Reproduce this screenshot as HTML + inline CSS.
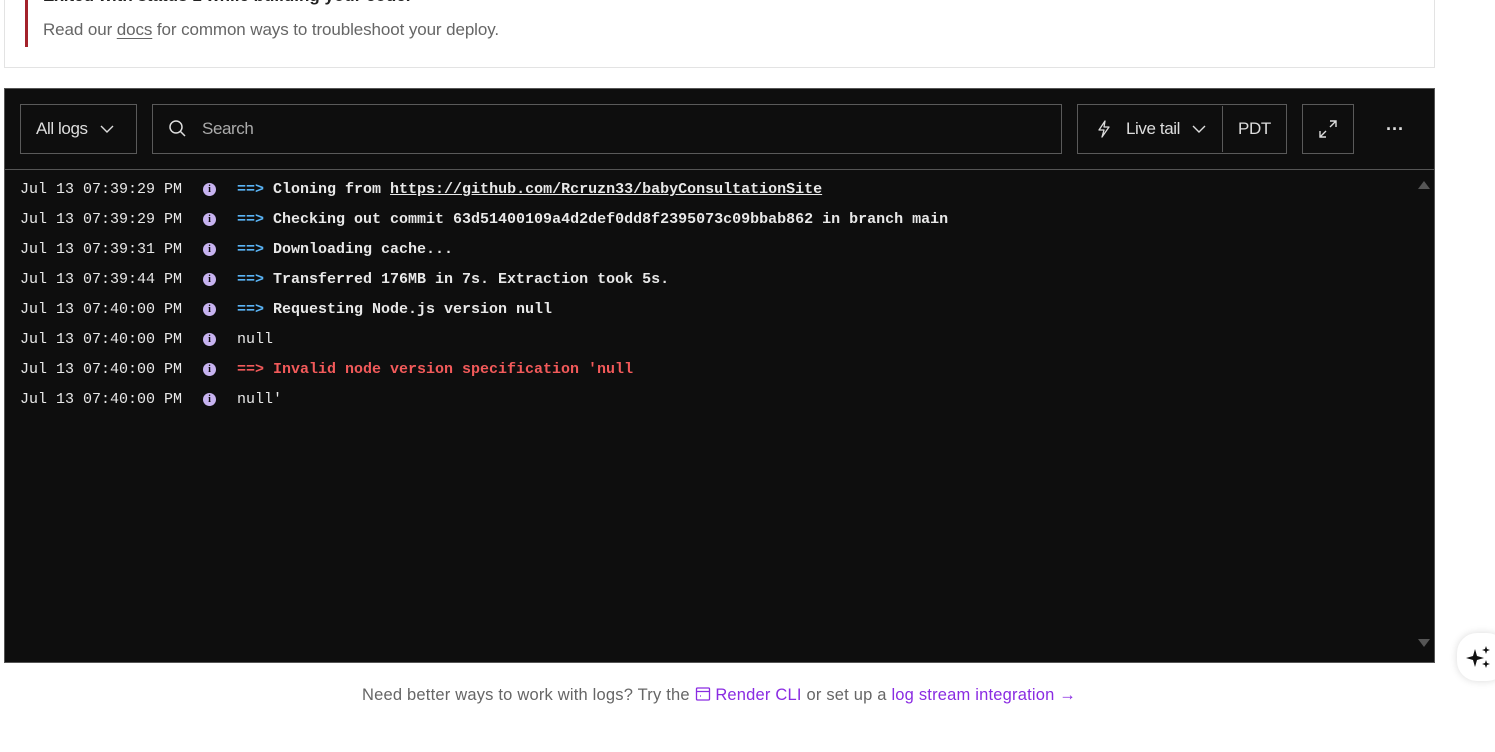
<!DOCTYPE html>
<html><head><style>
*{box-sizing:border-box;margin:0;padding:0}
body{width:1495px;height:752px;background:#fff;font-family:"Liberation Sans",sans-serif;position:relative;overflow:hidden}
.card{position:absolute;left:4px;top:-10px;width:1431px;height:78px;border:1px solid #e3e3e3;border-top:none;background:#fff}
.bar{position:absolute;left:20px;top:0;width:3px;height:57px;background:#a3222b}
.h{position:absolute;left:38px;font-size:17px;font-weight:bold;color:#222;line-height:20px}
.p{position:absolute;left:38px;top:30px;font-size:17px;color:#666;letter-spacing:-0.1px}
.p u{text-decoration:underline;text-underline-offset:3px}
.term{position:absolute;left:4px;top:88px;width:1431px;height:575px;background:#0e0e0e;border:1px solid #555}
.btn{position:absolute;top:15px;height:50px;border:1px solid #5a5a5a;color:#ddd;font-size:17px;display:flex;align-items:center;letter-spacing:-0.4px}
.sep{position:absolute;left:0;top:80px;width:1429px;height:1px;background:#555}
.log{position:absolute;left:15px;font-family:"Liberation Mono",monospace;font-size:15px;color:#e8e8e8;white-space:pre;height:20px;line-height:20px}
.log .m{position:absolute;left:217px;font-weight:bold}
.log .i{position:absolute;left:183px;top:3px;width:13px;height:13px;border-radius:50%;background:#c7b3f0;color:#0e0e0e;font-size:10px;line-height:13px;text-align:center;font-weight:bold;font-family:"Liberation Serif",serif}
.a{color:#5ab4f5}.r{color:#f25a5a}
.foot{position:absolute;left:362px;top:686px;font-size:16.5px;color:#666;letter-spacing:0.2px}
.foot span{color:#8a2be2}
.fab{position:absolute;left:1457px;top:633px;width:50px;height:48px;border-radius:20px;background:#fff;box-shadow:0 0 8px rgba(0,0,0,.15)}
</style></head><body>
<div class="card"><div class="bar"></div><div class="h" style="top:-4px">Exited with status 1 while building your code.</div><div class="p">Read our <u>docs</u> for common ways to troubleshoot your deploy.</div></div>
<div class="term">
<div class="btn" style="left:15px;width:117px;padding-left:15px">All logs<svg style="margin-left:12px" width="14" height="8" viewBox="0 0 14 8"><path d="M1 1l6 6 6-6" stroke="#ddd" fill="none" stroke-width="1.4"/></svg></div>
<div class="btn" style="left:147px;width:910px;padding-left:15px;color:#aaa"><svg width="20" height="20" viewBox="0 0 20 20"><circle cx="8" cy="8" r="6" stroke="#ddd" stroke-width="1.5" fill="none"/><path d="M12.5 12.5L17 17" stroke="#ddd" stroke-width="1.5"/></svg><span style="margin-left:14px">Search</span></div>
<div class="btn" style="left:1072px;width:210px;padding-left:18px"><svg width="16" height="18" viewBox="0 0 16 18"><path d="M9 1L3 10h5l-2 7 7-10H8l1-6z" stroke="#ddd" fill="none" stroke-width="1.3" stroke-linejoin="round"/></svg><span style="margin-left:14px">Live tail</span><svg style="margin-left:12px" width="14" height="8" viewBox="0 0 14 8"><path d="M1 1l6 6 6-6" stroke="#ddd" fill="none" stroke-width="1.4"/></svg><div style="position:absolute;left:144px;top:1px;width:1px;height:46px;background:#5a5a5a"></div><span style="position:absolute;left:160px">PDT</span></div>
<div class="btn" style="left:1297px;width:52px;justify-content:center"><svg width="20" height="20" viewBox="0 0 20 20"><path d="M12 2h6v6M18 2l-6 6M8 18H2v-6M2 18l6-6" stroke="#ddd" fill="none" stroke-width="1.4"/></svg></div>
<div style="position:absolute;left:1381px;top:30px;color:#ddd;font-size:18px;font-weight:bold">···</div>
<div class="sep"></div>
<div style="position:absolute;left:1413px;top:92px;width:0;height:0;border-left:6px solid transparent;border-right:6px solid transparent;border-bottom:8px solid #555"></div>
<div style="position:absolute;left:1413px;top:550px;width:0;height:0;border-left:6px solid transparent;border-right:6px solid transparent;border-top:8px solid #555"></div>
<div class="log" style="top:91px">Jul 13 07:39:29 PM<span class="i">i</span><span class="m"><span class="a">==&gt;</span> Cloning from <u>https://github.com/Rcruzn33/babyConsultationSite</u></span></div>
<div class="log" style="top:121px">Jul 13 07:39:29 PM<span class="i">i</span><span class="m"><span class="a">==&gt;</span> Checking out commit 63d51400109a4d2def0dd8f2395073c09bbab862 in branch main</span></div>
<div class="log" style="top:151px">Jul 13 07:39:31 PM<span class="i">i</span><span class="m"><span class="a">==&gt;</span> Downloading cache...</span></div>
<div class="log" style="top:181px">Jul 13 07:39:44 PM<span class="i">i</span><span class="m"><span class="a">==&gt;</span> Transferred 176MB in 7s. Extraction took 5s.</span></div>
<div class="log" style="top:211px">Jul 13 07:40:00 PM<span class="i">i</span><span class="m"><span class="a">==&gt;</span> Requesting Node.js version null</span></div>
<div class="log" style="top:241px">Jul 13 07:40:00 PM<span class="i">i</span><span class="m" style="font-weight:normal">null</span></div>
<div class="log" style="top:271px">Jul 13 07:40:00 PM<span class="i">i</span><span class="m r">==&gt; Invalid node version specification 'null</span></div>
<div class="log" style="top:301px">Jul 13 07:40:00 PM<span class="i">i</span><span class="m" style="font-weight:normal">null'</span></div>
</div>
<div class="foot">Need better ways to work with logs? Try the <span><svg width="16" height="16" viewBox="0 0 16 16" style="vertical-align:-2px"><rect x="1.5" y="2" width="13" height="12" rx="1" stroke="#8a2be2" fill="none" stroke-width="1.3"/><path d="M1.5 5.5h13M5 10h1" stroke="#8a2be2" stroke-width="1.3"/></svg> Render CLI</span> or set up a <span>log stream integration →</span></div>
<div class="fab"><svg style="position:absolute;left:9px;top:12px" width="26" height="26" viewBox="0 0 26 26"><path d="M9 4l2 7 7 2-7 2-2 7-2-7-7-2 7-2z" fill="#111"/><path d="M20 1l1 3 3 1-3 1-1 3-1-3-3-1 3-1zM20 15l1 3 3 1-3 1-1 3-1-3-3-1 3-1z" fill="#111"/></svg></div>
</body></html>
